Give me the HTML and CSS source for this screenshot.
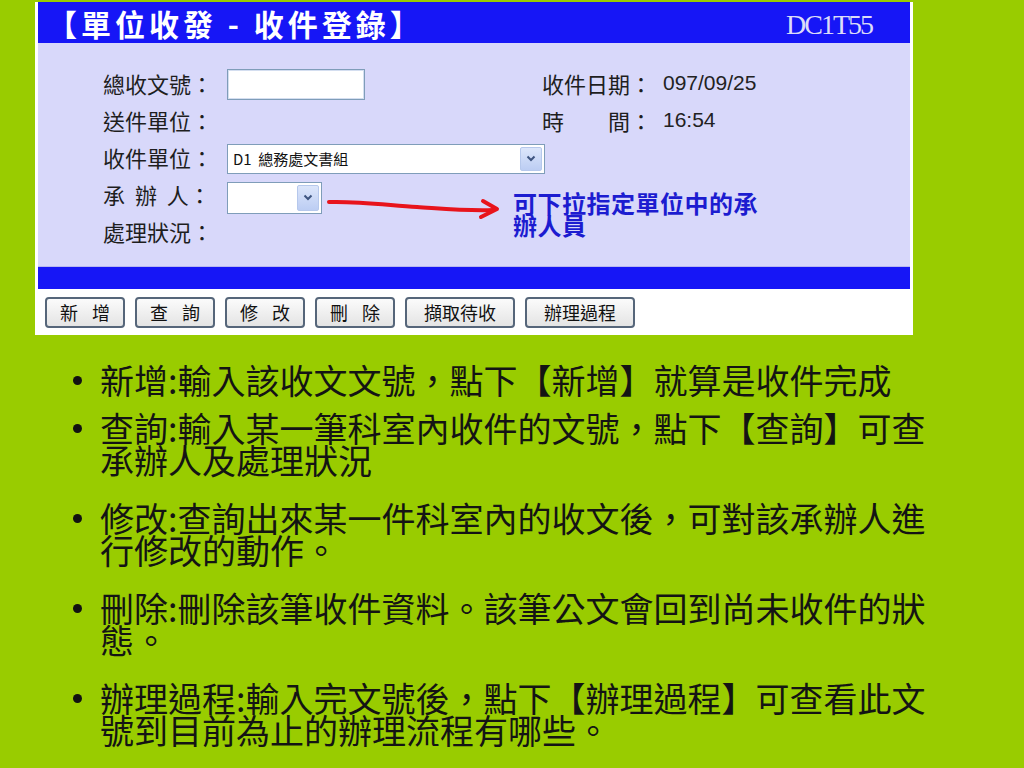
FILE: index.html
```html
<!DOCTYPE html>
<html lang="zh-Hant">
<head>
    <meta charset="UTF-8">
    <title>單位收發 - 收件登錄</title>
    <link rel="stylesheet" href="styles.css">
</head>
<body>
    <div class="panel">
        <div class="panel-head">
            <span class="title">【單位收發 - 收件登錄】</span>
            <span class="code">DC1T55</span>
        </div>
        <div class="panel-body">
            <div class="row">
                <span class="lbl">總收文號：</span>
                <span class="field"><span class="textbox"></span></span>
                <span class="lbl">收件日期：</span>
                <span class="val">097/09/25</span>
            </div>
            <div class="row">
                <span class="lbl">送件單位：</span>
                <span class="field"></span>
                <span class="lbl">時　　間：</span>
                <span class="val">16:54</span>
            </div>
            <div class="row">
                <span class="lbl">收件單位：</span>
                <span class="combo wide">
                    <span class="combo-text">D1&nbsp;&nbsp;總務處文書組</span>
                    <span class="drop"><svg width="10" height="7" viewBox="0 0 10 7"><path d="M1.5 1.5 L5 5 L8.5 1.5" fill="none" stroke="#3e5580" stroke-width="2"/></svg></span>
                </span>
            </div>
            <div class="row">
                <span class="lbl spread">承 辦 人：</span>
                <span class="combo small">
                    <span class="combo-text"></span>
                    <span class="drop"><svg width="10" height="7" viewBox="0 0 10 7"><path d="M1.5 1.5 L5 5 L8.5 1.5" fill="none" stroke="#3e5580" stroke-width="2"/></svg></span>
                </span>
                <svg class="arrow" width="175" height="24" viewBox="0 0 175 24">
                    <path d="M2 4 C 30 3, 60 7, 90 9 S 140 13, 166 12" fill="none" stroke="#e8141c" stroke-width="4" stroke-linecap="round"/>
                    <path d="M156 3 L170 11 L154 19" fill="none" stroke="#e8141c" stroke-width="4" stroke-linejoin="round" stroke-linecap="round"/>
                </svg>
                <span class="note">可下拉指定單位中的承辦人員</span>
            </div>
            <div class="row">
                <span class="lbl">處理狀況：</span>
            </div>
        </div>
        <div class="panel-bar"></div>
        <div class="panel-buttons">
            <span class="btn">新 增</span>
            <span class="btn">查 詢</span>
            <span class="btn">修 改</span>
            <span class="btn">刪 除</span>
            <span class="btn long">擷取待收</span>
            <span class="btn long">辦理過程</span>
        </div>
    </div>

    <ul class="notes">
        <li><span class="dot"></span><span class="txt">新增:輸入該收文文號，點下【新增】就算是收件完成</span></li>
        <li><span class="dot"></span><span class="txt">查詢:輸入某一筆科室內收件的文號，點下【查詢】可查承辦人及處理狀況</span></li>
        <li><span class="dot"></span><span class="txt">修改:查詢出來某一件科室內的收文後，可對該承辦人進行修改的動作。</span></li>
        <li><span class="dot"></span><span class="txt">刪除:刪除該筆收件資料。該筆公文會回到尚未收件的狀態。</span></li>
        <li><span class="dot"></span><span class="txt">辦理過程:輸入完文號後，點下【辦理過程】可查看此文號到目前為止的辦理流程有哪些。</span></li>
    </ul>
</body>
</html>
```

FILE: styles.css
```css
body {
    margin: 0;
    background-color: #99cc00;
    font-family: "Noto Sans CJK TC", "Noto Sans", sans-serif;
    width: 1024px;
    height: 768px;
    overflow: hidden;
}
.panel {
    margin: 2px 0 0 35px;
    width: 872px;
    border-left: 3px solid #fff;
    border-right: 3px solid #fff;
    background-color: #fff;
}
.panel-head {
    height: 41px;
    background-color: #1616f6;
    display: flex;
    align-items: center;
    justify-content: space-between;
    padding: 0 38px 0 9px;
}
.title {
    color: #fff;
    font-size: 30px;
    font-weight: bold;
    letter-spacing: 4px;
    line-height: 1;
}
.code {
    color: #dcdcf8;
    font-family: "Liberation Serif", serif;
    font-size: 28px;
    letter-spacing: -2px;
    margin-top: 5px;
}
.panel-body {
    height: 224px;
    box-sizing: border-box;
    padding: 23px 0 0 65px;
    background-color: #d8d8fa;
    border-bottom: 1px solid #b8b8f0;
}
.row {
    height: 37px;
    display: flex;
    align-items: center;
}
.lbl {
    width: 124px;
    flex: none;
    font-size: 22px;
    color: #1e1e1e;
    line-height: 1;
    margin-top: -4px;
}
.spread {
    word-spacing: 5px;
}
.field {
    width: 315px;
    flex: none;
}
.textbox {
    display: block;
    width: 136px;
    height: 29px;
    background: #fff;
    border: 1px solid #7f9db9;
    box-shadow: inset 0 0 0 1px #d4def0;
}
.val {
    font-family: "Liberation Sans", sans-serif;
    font-size: 21px;
    color: #222;
    margin-left: -3px;
    margin-top: -4px;
}
.combo {
    display: flex;
    align-items: center;
    height: 30px;
    box-sizing: border-box;
    background: #fff;
    border: 1px solid #7f9db9;
    padding: 2px;
}
.combo.wide {
    width: 318px;
}
.combo.small {
    width: 95px;
    height: 32px;
    margin-top: 4px;
}
.combo-text {
    flex: 1;
    font-size: 15px;
    padding-left: 3px;
    color: #111;
}
.drop {
    width: 22px;
    height: 100%;
    box-sizing: border-box;
    display: flex;
    align-items: center;
    justify-content: center;
    border-radius: 2px;
    border: 1px solid #b6c8ec;
    background: linear-gradient(#dce6fb, #bccdf3);
}
.arrow {
    align-self: flex-start;
    margin: 21px 0 0 5px;
    flex: none;
}
.note {
    align-self: flex-start;
    margin: 15px 0 0 11px;
    width: 250px;
    font-size: 24px;
    font-weight: bold;
    line-height: 22px;
    color: #1c1cd0;
    letter-spacing: 0.5px;
}
.panel-bar {
    height: 22px;
    background-color: #1616f6;
}
.panel-buttons {
    height: 46px;
    display: flex;
    align-items: center;
    gap: 10px;
    padding-left: 7px;
}
.btn {
    width: 80px;
    height: 31px;
    box-sizing: border-box;
    display: flex;
    align-items: center;
    justify-content: center;
    border: 2px solid #56667a;
    border-radius: 4px;
    background: linear-gradient(#fbfbfb, #e4e4e4);
    font-size: 18px;
    color: #111;
    word-spacing: 10px;
}
.btn.long {
    width: 110px;
}
.notes {
    list-style: none;
    margin: 29px 0 0 73px;
    padding: 0;
    width: 870px;
}
.notes li {
    display: flex;
    align-items: flex-start;
    margin-bottom: 26px;
}
.notes li:first-child {
    margin-bottom: 16px;
}
.dot {
    flex: none;
    width: 9px;
    height: 9px;
    border-radius: 50%;
    background: #111;
    margin: 12px 18px 0 0;
}
.txt {
    width: 840px;
    font-size: 34px;
    line-height: 32px;
    color: #141414;
}
```
